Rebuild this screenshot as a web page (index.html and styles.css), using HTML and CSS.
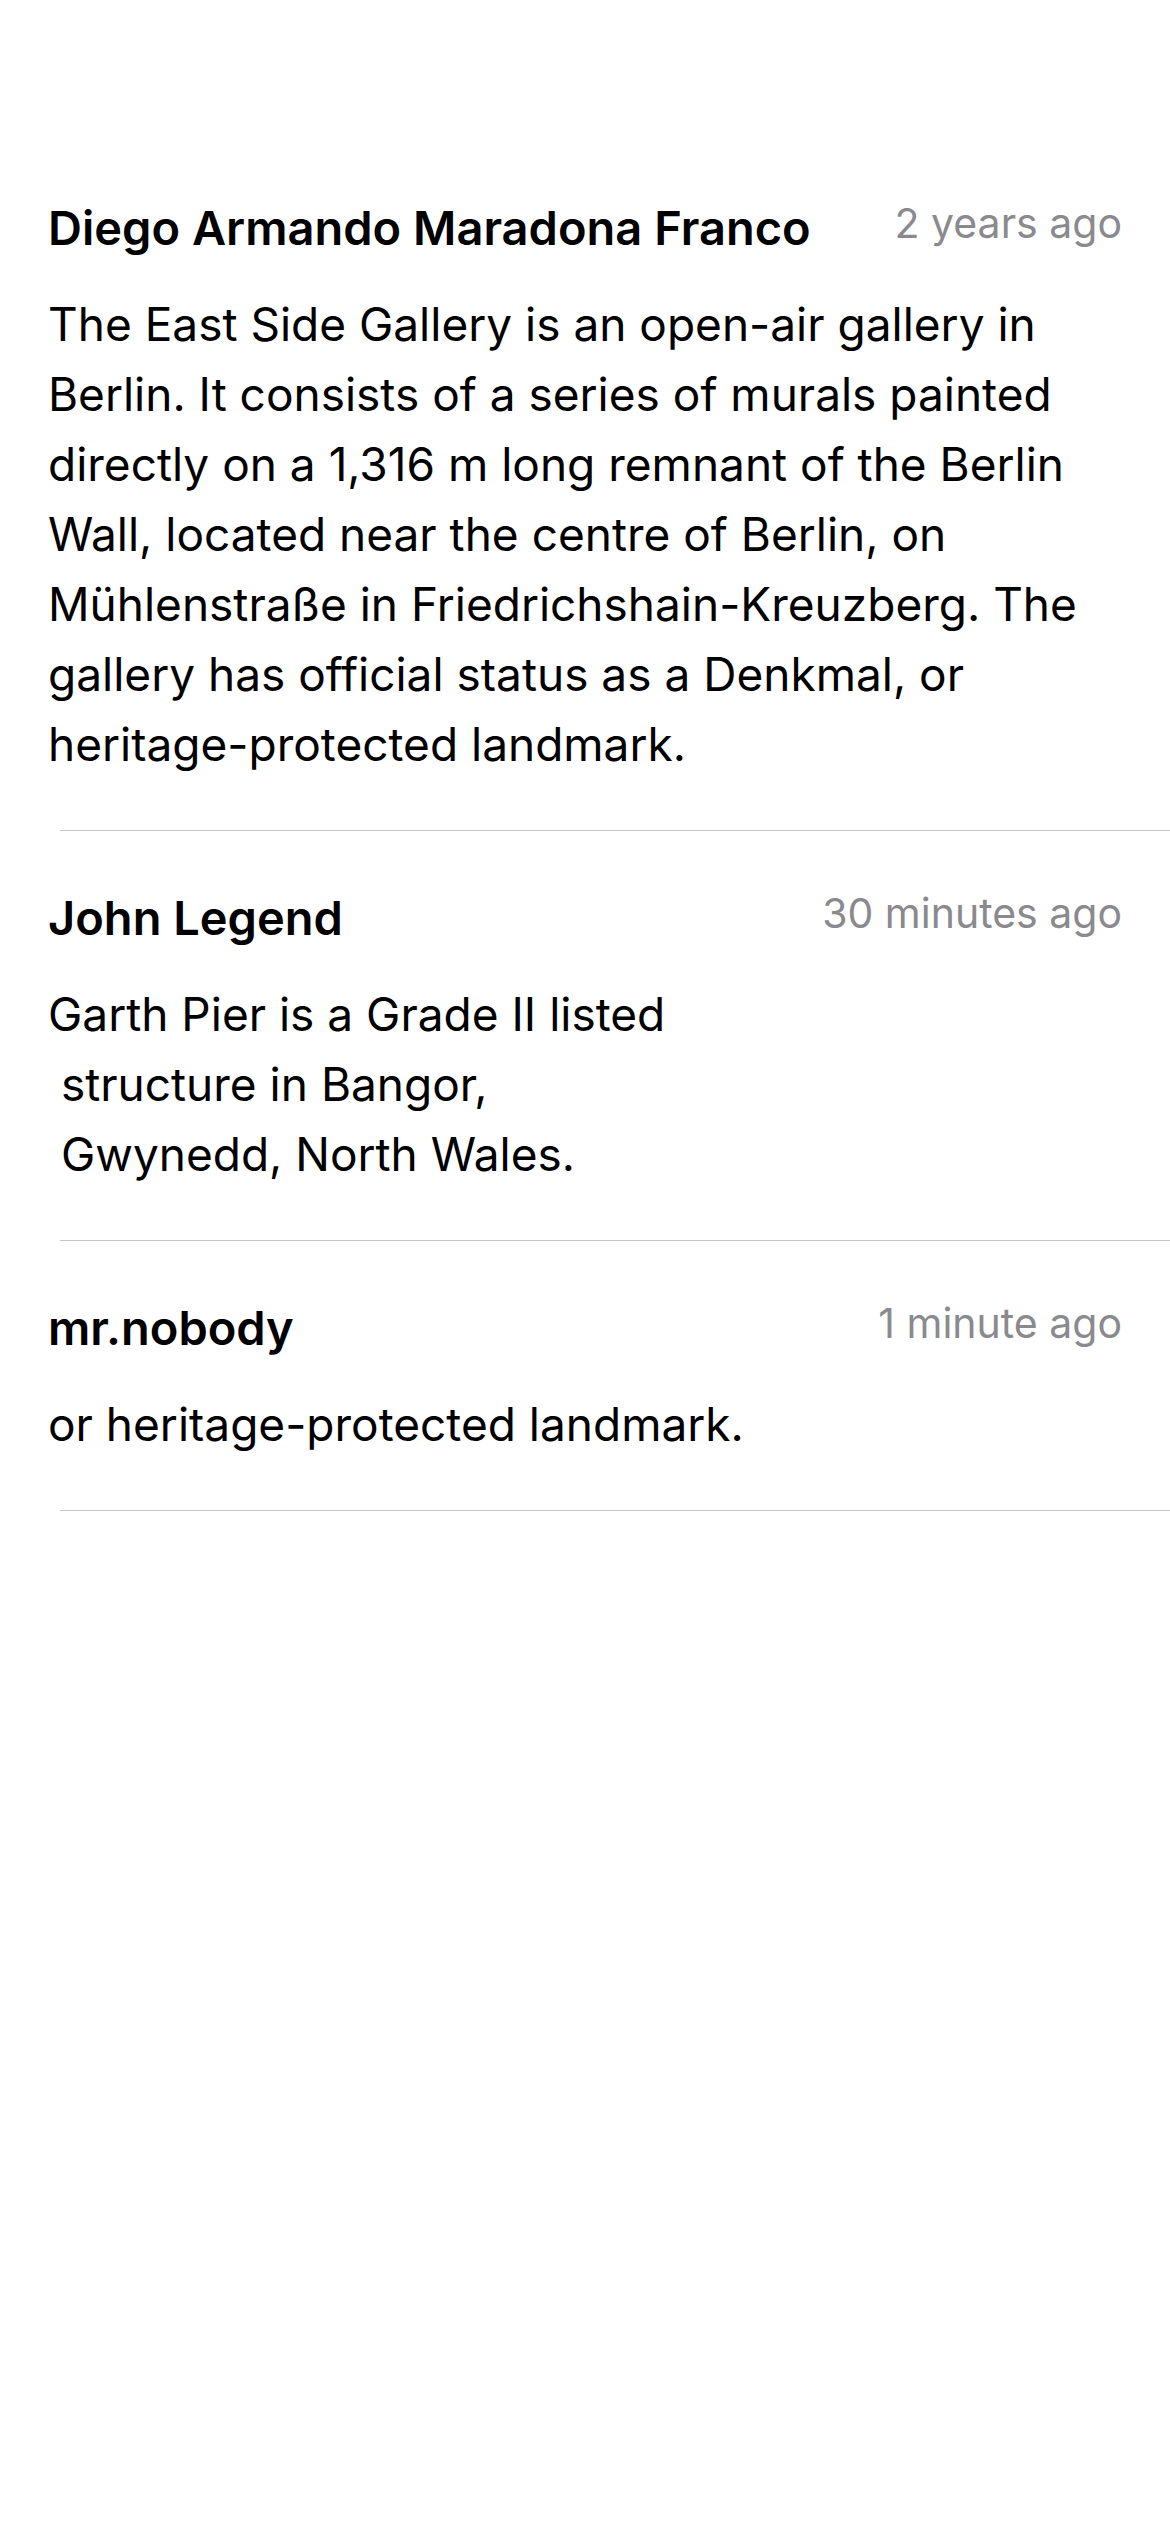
FILE: index.html
```html
<!DOCTYPE html>
<html lang="en">
<head>
<meta charset="utf-8">
<meta name="viewport" content="width=device-width, initial-scale=1">
<title>Comments</title>
<link rel="stylesheet" href="styles.css">
</head>
<body>
<main class="comments">
  <article class="comment">
    <header class="comment-header">
      <h2 class="author">Diego Armando Maradona Franco</h2>
      <time class="time">2 years ago</time>
    </header>
    <p class="body">The East Side Gallery is an open-air gallery in
Berlin. It consists of a series of murals painted
directly on a 1,316 m long remnant of the Berlin
Wall, located near the centre of Berlin, on
Mühlenstraße in Friedrichshain-Kreuzberg. The
gallery has official status as a Denkmal, or
heritage-protected landmark.</p>
  </article>
  <article class="comment">
    <header class="comment-header">
      <h2 class="author">John Legend</h2>
      <time class="time">30 minutes ago</time>
    </header>
    <p class="body">Garth Pier is a Grade II listed
 structure in Bangor,
 Gwynedd, North Wales.</p>
  </article>
  <article class="comment">
    <header class="comment-header">
      <h2 class="author">mr.nobody</h2>
      <time class="time">1 minute ago</time>
    </header>
    <p class="body">or heritage-protected landmark.</p>
  </article>
</main>
</body>
</html>
```

FILE: styles.css
```css
* {
  box-sizing: border-box;
}

body {
  margin: 0;
  background: #fff;
  color: #000;
  font-family: Inter, "Liberation Sans", sans-serif;
}

.comments {
  padding-top: 141px;
}

/* The separator is inset on the left and runs to the right edge. */
.comment {
  padding: 55px 48px 52px;
  background: linear-gradient(#c6c6c8, #c6c6c8) 60px 100% / 100% 1px no-repeat;
}

.comment-header {
  display: flex;
  justify-content: space-between;
  align-items: flex-start;
  gap: 24px;
  margin-bottom: 29px;
}

.author {
  margin: 0;
  font-size: 47px;
  font-weight: 600;
  line-height: 64px;
}

.time {
  color: #8a8a8e;
  font-size: 41px;
  line-height: 54px;
  white-space: nowrap;
}

.body {
  margin: 0;
  font-size: 46px;
  line-height: 70px;
  white-space: pre-wrap;
}
```
